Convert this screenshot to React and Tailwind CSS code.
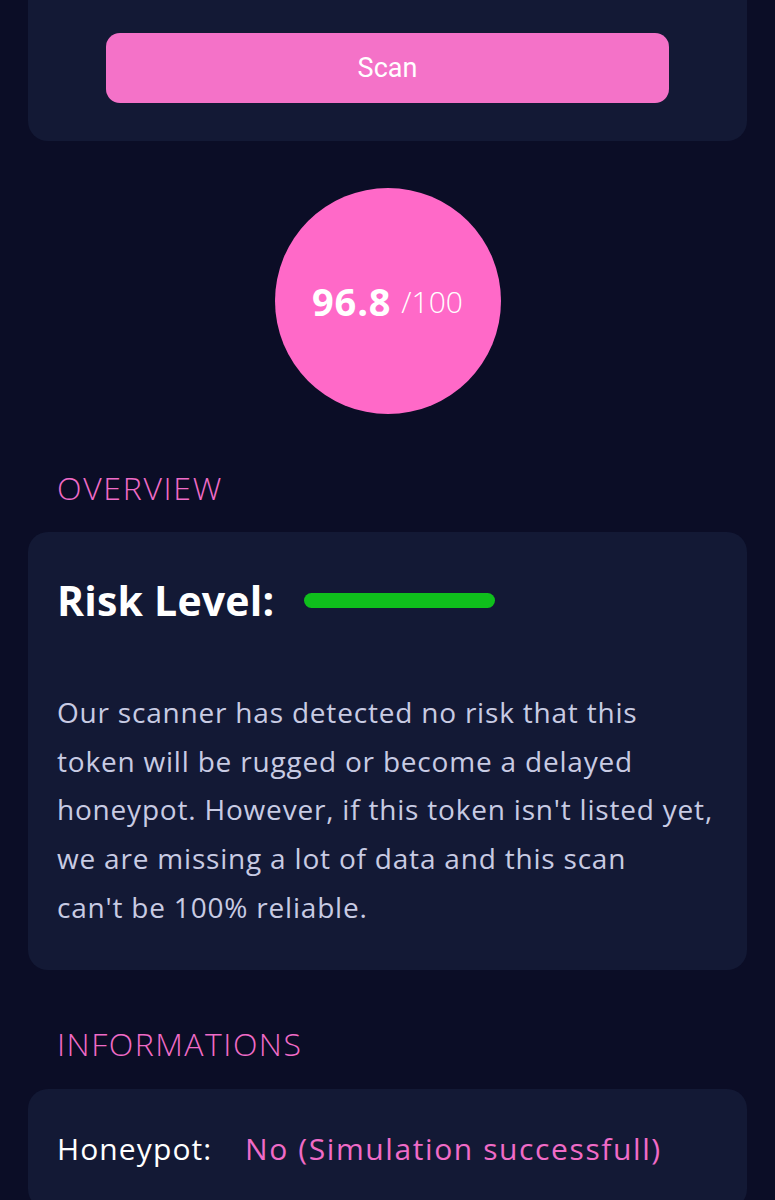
export default function App() {
  const font = { fontFamily: '"Open Sans", "Liberation Sans", sans-serif' };
  return (
    <div className="min-h-[1200px] bg-[#0b0d26] px-[28px] pb-10" style={font}>
      {/* scan card */}
      <div className="bg-[#131935] rounded-b-[20px] px-[78px] pt-[33px] pb-[38px]">
        <button className="w-full h-[70px] rounded-[14px] bg-[#f472c8] text-white text-[27px] font-['Roboto',sans-serif]">
          Scan
        </button>
      </div>

      {/* score */}
      <div className="flex justify-center mt-[47px]">
        <div className="w-[226px] h-[226px] rounded-full bg-[#ff69c8] flex items-center justify-center text-white">
          <span className="text-[38px] font-bold tracking-[0.8px]">96.8</span>
          <span className="text-[30px] font-light ml-[10px]">/100</span>
        </div>
      </div>

      <h2 className="mt-[54px] px-[29px] text-[32px] font-light tracking-[1.7px] text-[#f06bc7] leading-[40px]">OVERVIEW</h2>

      <div className="mt-[24px] bg-[#131935] rounded-[20px] px-[29px] pt-[44px] pb-[38px]">
        <div className="flex items-center">
          <span className="text-[41px] font-bold tracking-[0.2px] text-white leading-[48px]">Risk Level:</span>
          <div className="ml-[30px] w-[191px] h-[15px] rounded-full bg-[#0fbf1c]" />
        </div>
        <p className="mt-[64px] text-[28px] tracking-[0.8px] leading-[48.7px] text-[#c8cbe3]">
          Our scanner has detected no risk that this<br />
          token will be rugged or become a delayed<br />
          honeypot. However, if this token isn't listed yet,<br />
          we are missing a lot of data and this scan<br />
          can't be 100% reliable.
        </p>
      </div>

      <h2 className="mt-[54px] px-[29px] text-[32px] font-light tracking-[1.5px] text-[#f06bc7] leading-[40px]">INFORMATIONS</h2>

      <div className="mt-[25px] bg-[#131935] rounded-[20px] px-[29px] pt-[40px] pb-[40px]">
        <div className="flex items-center text-[30px] leading-[40px]">
          <span className="text-white w-[188px] tracking-[1.1px]">Honeypot:</span>
          <span className="text-[#f06bc7] tracking-[1.6px]">No (Simulation successfull)</span>
        </div>
      </div>
    </div>
  );
}
